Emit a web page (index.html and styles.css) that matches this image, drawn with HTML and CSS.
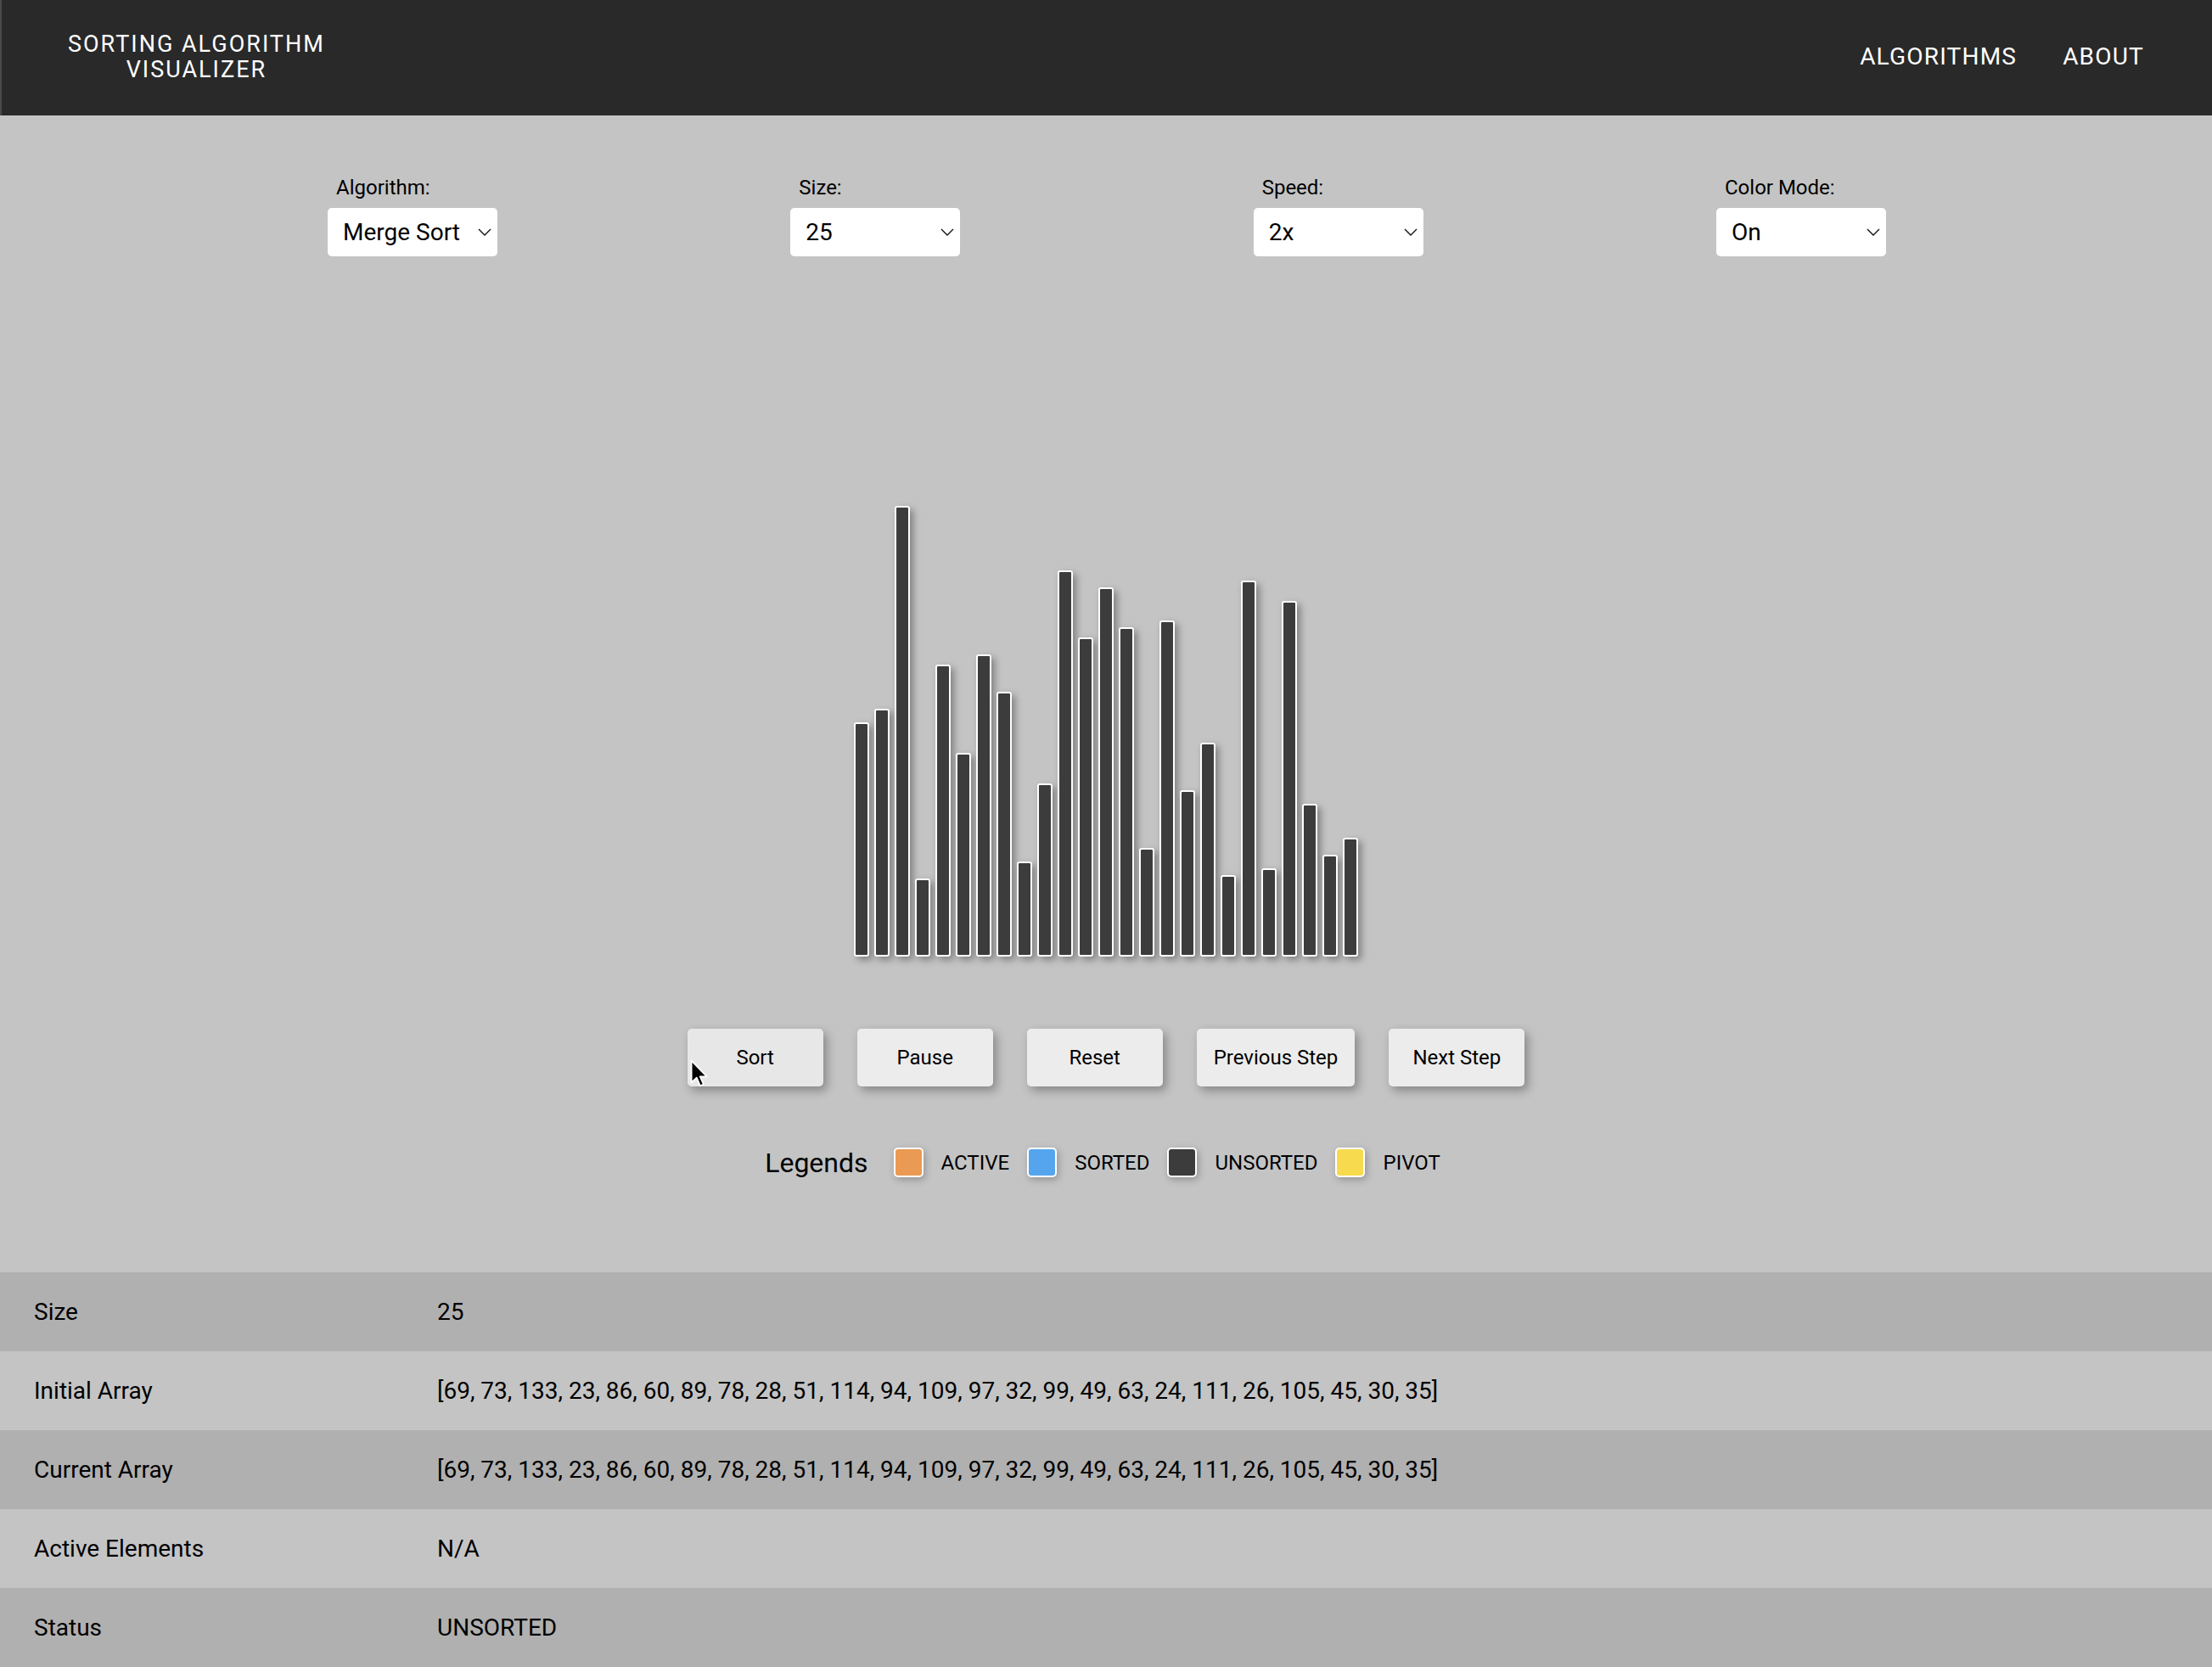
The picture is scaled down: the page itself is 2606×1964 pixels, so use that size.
FILE: index.html
```html
<!DOCTYPE html>
<html lang="en">
<head>
<meta charset="utf-8">
<title>Sorting Algorithm Visualizer</title>
<link rel="stylesheet" href="styles.css">
</head>
<body>
<header class="topbar">
  <div class="brand">SORTING ALGORITHM<br>VISUALIZER</div>
  <nav class="nav">
    <a class="nav-link" href="#">ALGORITHMS</a>
    <a class="nav-link" href="#">ABOUT</a>
  </nav>
</header>

<main class="main">
  <section class="controls">
    <div class="control">
      <div class="control-label">Algorithm:</div>
      <div class="select"><span>Merge Sort</span><svg class="chev" viewBox="0 0 16 9" width="16" height="9"><polyline points="1,1 8,8 15,1" fill="none" stroke="#111" stroke-width="1.4"/></svg></div>
    </div>
    <div class="control">
      <div class="control-label">Size:</div>
      <div class="select"><span>25</span><svg class="chev" viewBox="0 0 16 9" width="16" height="9"><polyline points="1,1 8,8 15,1" fill="none" stroke="#111" stroke-width="1.4"/></svg></div>
    </div>
    <div class="control">
      <div class="control-label">Speed:</div>
      <div class="select"><span>2x</span><svg class="chev" viewBox="0 0 16 9" width="16" height="9"><polyline points="1,1 8,8 15,1" fill="none" stroke="#111" stroke-width="1.4"/></svg></div>
    </div>
    <div class="control">
      <div class="control-label">Color Mode:</div>
      <div class="select"><span>On</span><svg class="chev" viewBox="0 0 16 9" width="16" height="9"><polyline points="1,1 8,8 15,1" fill="none" stroke="#111" stroke-width="1.4"/></svg></div>
    </div>
  </section>

  <section class="chart">
    <div class="bar" style="height:276px"></div>
    <div class="bar" style="height:292px"></div>
    <div class="bar" style="height:531px"></div>
    <div class="bar" style="height:92px"></div>
    <div class="bar" style="height:344px"></div>
    <div class="bar" style="height:240px"></div>
    <div class="bar" style="height:356px"></div>
    <div class="bar" style="height:312px"></div>
    <div class="bar" style="height:112px"></div>
    <div class="bar" style="height:204px"></div>
    <div class="bar" style="height:455px"></div>
    <div class="bar" style="height:376px"></div>
    <div class="bar" style="height:435px"></div>
    <div class="bar" style="height:388px"></div>
    <div class="bar" style="height:128px"></div>
    <div class="bar" style="height:396px"></div>
    <div class="bar" style="height:196px"></div>
    <div class="bar" style="height:252px"></div>
    <div class="bar" style="height:96px"></div>
    <div class="bar" style="height:443px"></div>
    <div class="bar" style="height:104px"></div>
    <div class="bar" style="height:419px"></div>
    <div class="bar" style="height:180px"></div>
    <div class="bar" style="height:120px"></div>
    <div class="bar" style="height:140px"></div>
  </section>

  <section class="actions">
    <button class="btn btn-hover">Sort<svg class="cursor" viewBox="0 0 13 21" width="21" height="34"><path d="M1 1 L1 17 L4.8 13.4 L7.3 19.3 L9.8 18.2 L7.3 12.6 L12.2 12.6 Z" fill="#000" stroke="#fff" stroke-width="1.1" stroke-linejoin="round"/></svg></button>
    <button class="btn">Pause</button>
    <button class="btn">Reset</button>
    <button class="btn">Previous Step</button>
    <button class="btn">Next Step</button>
  </section>

  <section class="legend">
    <span class="legend-title">Legends</span>
    <span class="swatch swatch-active"></span><span class="legend-item">ACTIVE</span>
    <span class="swatch swatch-sorted"></span><span class="legend-item">SORTED</span>
    <span class="swatch swatch-unsorted"></span><span class="legend-item">UNSORTED</span>
    <span class="swatch swatch-pivot"></span><span class="legend-item">PIVOT</span>
  </section>
</main>

<table class="info">
  <tr><td class="info-key">Size</td><td class="info-val">25</td></tr>
  <tr><td class="info-key">Initial Array</td><td class="info-val">[69, 73, 133, 23, 86, 60, 89, 78, 28, 51, 114, 94, 109, 97, 32, 99, 49, 63, 24, 111, 26, 105, 45, 30, 35]</td></tr>
  <tr><td class="info-key">Current Array</td><td class="info-val">[69, 73, 133, 23, 86, 60, 89, 78, 28, 51, 114, 94, 109, 97, 32, 99, 49, 63, 24, 111, 26, 105, 45, 30, 35]</td></tr>
  <tr><td class="info-key">Active Elements</td><td class="info-val">N/A</td></tr>
  <tr><td class="info-key">Status</td><td class="info-val">UNSORTED</td></tr>
</table>
</body>
</html>
```

FILE: styles.css
```css
* { box-sizing: border-box; }

html, body {
  margin: 0;
  padding: 0;
}

body {
  background: #c4c4c4;
  font-family: Roboto, "Liberation Sans", Arial, sans-serif;
  color: #111;
}

.topbar {
  height: 136px;
  background: #292929;
  display: flex;
  align-items: center;
  justify-content: space-between;
  padding: 0 80px;
  border-left: 2px solid #4a4a4a;
}

.brand {
  color: #fff;
  font-size: 27px;
  font-weight: 400;
  letter-spacing: 2px;
  line-height: 30px;
  text-align: center;
  margin-left: -2px;
  margin-top: -2px;
}

.nav {
  display: flex;
  gap: 54px;
}

.nav-link {
  color: #fff;
  text-decoration: none;
  font-size: 28px;
  font-weight: 400;
  letter-spacing: 1.2px;
  margin-top: -3px;
}

.main {
  display: flex;
  flex-direction: column;
}

.controls {
  display: flex;
  justify-content: space-between;
  padding: 71px 384px 0 386px;
}

.control {
  display: flex;
  flex-direction: column;
}

.control-label {
  font-size: 24px;
  line-height: 28px;
  padding-left: 10px;
  margin-bottom: 10px;
  color: #000;
}

.select {
  width: 200px;
  height: 57px;
  background: #fff;
  border-radius: 5px;
  display: flex;
  align-items: center;
  justify-content: space-between;
  padding: 0 7px 0 18px;
  font-size: 28px;
  color: #000;
}

.chev { display: block; }

.chart {
  height: 825px;
  display: flex;
  justify-content: center;
  align-items: flex-end;
  gap: 6px;
}

.bar {
  width: 18px;
  background: #3c3c3c;
  border: 2px solid #fff;
  border-radius: 3px;
  box-shadow: 4px 4px 9px rgba(0, 0, 0, 0.35);
}

.actions {
  margin-top: 85px;
  display: flex;
  justify-content: center;
  gap: 40px;
}

.btn {
  position: relative;
  min-width: 160px;
  height: 68px;
  padding: 0 20px;
  border: none;
  border-radius: 5px;
  background: #ececec;
  font-family: Roboto, "Liberation Sans", Arial, sans-serif;
  font-size: 24px;
  color: #000;
  box-shadow: 4px 5px 12px rgba(0, 0, 0, 0.32);
}

.btn-hover { background: #e7e7e7; }

.cursor {
  position: absolute;
  left: 3px;
  top: 36px;
}

.legend {
  margin-top: 72px;
  height: 35px;
  display: flex;
  justify-content: center;
  align-items: center;
  gap: 21px;
  padding-right: 8px;
}

.legend-title {
  font-size: 32px;
  margin-right: 9px;
  color: #000;
}

.legend-item {
  font-size: 24px;
  color: #000;
}

.swatch {
  width: 35px;
  height: 35px;
  border: 2px solid #fff;
  border-radius: 5px;
  box-shadow: 2px 3px 8px rgba(0, 0, 0, 0.25);
}

.swatch-active { background: #ea9a52; }
.swatch-sorted { background: #55a5ee; }
.swatch-unsorted { background: #3c3c3c; }
.swatch-pivot { background: #f7da4e; }

.info {
  margin-top: 112px;
  width: 100%;
  border-collapse: collapse;
  font-size: 28px;
  color: #000;
}

.info tr { height: 93px; }
.info tr:nth-child(odd) { background: #b0b0b0; }
.info tr:nth-child(even) { background: #c4c4c4; }

.info td {
  padding: 0 40px;
  vertical-align: middle;
}

.info-key { width: 475px; }
.info-val { padding-left: 40px; }
```
